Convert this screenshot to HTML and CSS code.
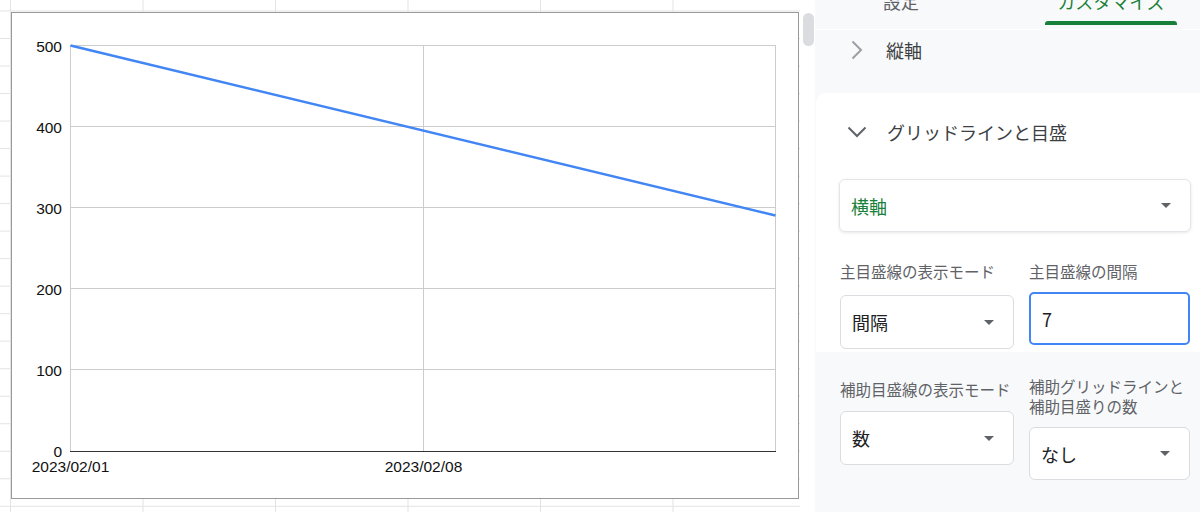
FILE: index.html
```html
<!DOCTYPE html>
<html lang="ja">
<head>
  <meta charset="UTF-8">
  <title>グラフエディタ</title>
  <link rel="stylesheet" href="styles.css">
</head>
<body>

  <div class="sheet">
    <div class="chart">
      <svg class="chart-svg" width="786" height="485" viewBox="0 0 786 485">
        <g stroke="#cccccc" stroke-width="1">
          <line x1="58" y1="32.5" x2="764" y2="32.5"/>
          <line x1="58" y1="113.5" x2="764" y2="113.5"/>
          <line x1="58" y1="194.5" x2="764" y2="194.5"/>
          <line x1="58" y1="275.5" x2="764" y2="275.5"/>
          <line x1="58" y1="356.5" x2="764" y2="356.5"/>
          <line x1="58.5" y1="32" x2="58.5" y2="438"/>
          <line x1="411.5" y1="32" x2="411.5" y2="438"/>
          <line x1="763.5" y1="32" x2="763.5" y2="438"/>
        </g>
        <line x1="58" y1="438.5" x2="764" y2="438.5" stroke="#333333" stroke-width="1"/>
        <line x1="58.5" y1="32.5" x2="763.5" y2="202.5" stroke="#4285f4" stroke-width="2.5"/>
        <g class="axis-text" text-anchor="end">
          <text x="50" y="38.5">500</text>
          <text x="50" y="119.5">400</text>
          <text x="50" y="200.5">300</text>
          <text x="50" y="281.5">200</text>
          <text x="50" y="362.5">100</text>
          <text x="50" y="444">0</text>
        </g>
        <g class="axis-text" text-anchor="middle">
          <text x="58.5" y="459">2023/02/01</text>
          <text x="411.5" y="459">2023/02/08</text>
        </g>
      </svg>
    </div>
  </div>

  <div class="scroll"><div class="thumb"></div></div>

  <aside class="panel">
    <div class="tabs">
      <div class="tab"><span class="tab-label">設定</span></div>
      <div class="tab active"><span class="tab-label">カスタマイズ</span><span class="tab-bar"></span></div>
    </div>

    <div class="axis-row">
      <svg width="12" height="20" viewBox="0 0 12 20"><polyline points="1.5,1.5 10,10 1.5,18.5" fill="none" stroke="#9aa0a6" stroke-width="2"/></svg>
      <span>縦軸</span>
    </div>

    <div class="card">
      <div class="card-head">
        <svg width="20" height="12" viewBox="0 0 20 12"><polyline points="1.5,1.5 10,10 18.5,1.5" fill="none" stroke="#5f6368" stroke-width="2"/></svg>
        <span>グリッドラインと目盛</span>
      </div>

      <div class="select">
        <span class="select-green">横軸</span>
        <span class="caret"></span>
      </div>

      <div class="fields fields-top">
        <div>
          <div class="field-label">主目盛線の表示モード</div>
          <div class="dropdown"><span>間隔</span><span class="caret"></span></div>
        </div>
        <div>
          <div class="field-label">主目盛線の間隔</div>
          <div class="input">7</div>
        </div>
      </div>

      <div class="fields fields-bottom">
        <div>
          <div class="field-label shift">補助目盛線の表示モード</div>
          <div class="dropdown tight"><span>数</span><span class="caret"></span></div>
        </div>
        <div>
          <div class="field-label">補助グリッドラインと<br>補助目盛りの数</div>
          <div class="dropdown short"><span>なし</span><span class="caret"></span></div>
        </div>
      </div>
    </div>
  </aside>

</body>
</html>
```

FILE: styles.css
```css
body {
  margin: 0;
  width: 1200px;
  height: 512px;
  overflow: hidden;
  display: flex;
  background: #fff;
  font-family: "Noto Sans CJK JP", sans-serif;
}

/* hoja de cálculo con la cuadrícula */
.sheet {
  width: 800px;
  height: 512px;
  flex: none;
  box-sizing: border-box;
  padding: 12px 0 0 11px;
  background-color: #fff;
  background-image:
    linear-gradient(to right, #e2e3e3 1px, transparent 1px),
    linear-gradient(to bottom, #e2e3e3 1px, transparent 1px);
  background-size: 132.5px 27.53px;
  background-position: 10px 10.5px;
}
.chart {
  width: 788px;
  height: 487px;
  box-sizing: border-box;
  border: 1px solid #999;
  background: #fff;
}
.chart-svg {
  display: block;
}
.axis-text text {
  font-family: "Liberation Sans", Arial, sans-serif;
  font-size: 15.5px;
  fill: #111;
}

.scroll {
  width: 15px;
  flex: none;
  box-sizing: border-box;
  padding-top: 13px;
  background: #fff;
}
.thumb {
  width: 11px;
  height: 33px;
  margin-left: 3px;
  border-radius: 6px;
  background: #dadce0;
}

/* panel lateral */
.panel {
  width: 385px;
  flex: none;
  display: flex;
  flex-direction: column;
  background: #f8f9fa;
}
.tabs {
  height: 29px;
  border-bottom: 1px solid #fff;
  display: flex;
  gap: 78px;
  padding-left: 20px;
  overflow: hidden;
}
.tab {
  width: 132px;
  display: flex;
  flex-direction: column;
  align-items: center;
}
.tab-label {
  font-size: 18px;
  line-height: 18px;
  margin-top: -8px;
  color: #5f6368;
  white-space: nowrap;
}
.tab.active .tab-label {
  color: #188038;
}
.tab-bar {
  width: 100%;
  height: 4px;
  margin-top: 11px;
  border-radius: 3px 3px 0 0;
  background: #188038;
}

.axis-row {
  height: 40px;
  display: flex;
  align-items: center;
  gap: 23px;
  padding-left: 36px;
  font-size: 18px;
  color: #3c4043;
}

.card {
  flex: 1;
  margin-top: 23px;
  margin-left: 1px;
  display: flex;
  flex-direction: column;
  background: #fff;
  border-radius: 10px 0 0 0;
}
.card-head {
  height: 78px;
  display: flex;
  align-items: center;
  gap: 20px;
  padding-left: 31px;
  font-size: 18px;
  color: #3c4043;
}

.select {
  height: 53px;
  margin: 8px 9px 0 23px;
  box-sizing: border-box;
  display: flex;
  align-items: center;
  justify-content: space-between;
  padding: 0 19px 0 11px;
  border: 1px solid #e3e5e8;
  border-radius: 6px;
  box-shadow: 0 1px 3px rgba(60,64,67,0.12);
  font-size: 18px;
}
.select-green {
  color: #188038;
}
.caret {
  width: 0;
  height: 0;
  border-left: 5px solid transparent;
  border-right: 5px solid transparent;
  border-top: 5px solid #5f6368;
}

.fields {
  display: grid;
  grid-template-columns: 174px 161px;
  column-gap: 15px;
  padding-left: 24px;
  align-items: start;
}
.fields-top {
  margin-top: 29px;
}
.fields-bottom {
  flex: 1;
  margin-top: 3px;
  padding-top: 24px;
  background: #f8f9fa;
}
.field-label {
  font-size: 15.5px;
  line-height: 20px;
  color: #5f6368;
  white-space: nowrap;
}
.field-label.shift {
  padding-top: 3px;
}

.dropdown,
.input {
  box-sizing: border-box;
  display: flex;
  align-items: center;
  font-size: 18px;
  color: #202124;
  background: #fff;
}
.dropdown {
  height: 54px;
  margin-top: 14px;
  justify-content: space-between;
  padding: 0 19px 0 11px;
  border: 1px solid #dadce0;
  border-radius: 6px;
}
.dropdown.tight {
  margin-top: 12px;
}
.dropdown.short {
  height: 53px;
  margin-top: 11px;
}
.input {
  height: 53px;
  margin-top: 11px;
  padding-left: 11px;
  border: 2px solid #4285f4;
  border-radius: 5px;
}
```
